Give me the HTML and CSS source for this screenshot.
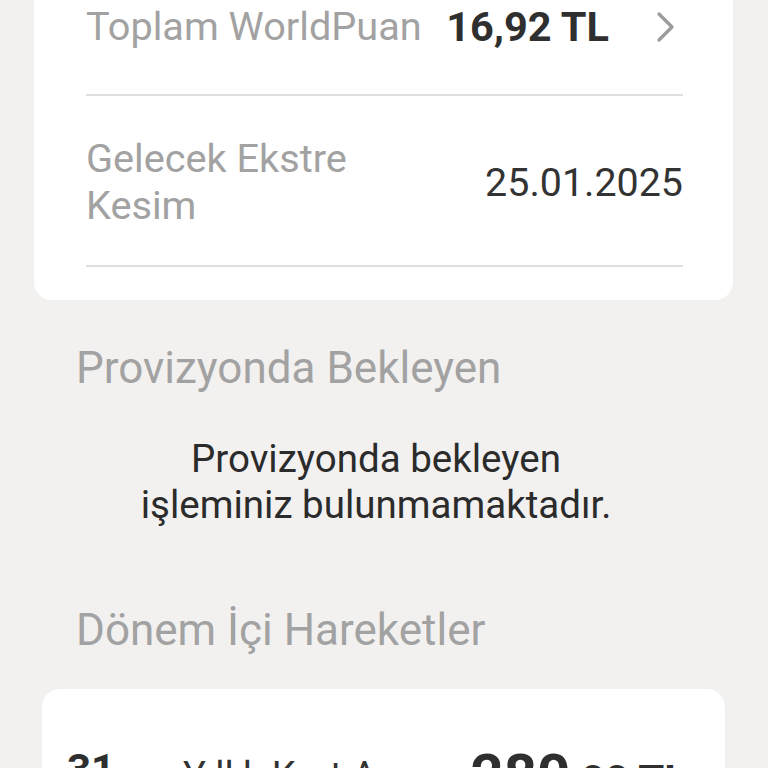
FILE: index.html
```html
<!DOCTYPE html>
<html lang="tr">
<head>
  <meta charset="UTF-8" />
  <meta name="viewport" content="width=device-width, initial-scale=1.0"/>
  <title>Kart Detayı</title>
  <link rel="stylesheet" href="styles.css">
</head>
<body>
  <div class="summary">
    <div class="row">
      <div class="label">Toplam WorldPuan</div>
      <div class="value bold">16,92 TL</div>
      <svg class="chevron" width="20" height="32" viewBox="0 0 20 32">
        <polyline points="3,3 16,16 3,29" fill="none" stroke="#9b9b9b" stroke-width="3.2" stroke-linecap="round" stroke-linejoin="round"/>
      </svg>
    </div>
    <div class="row">
      <div class="label wrap">Gelecek Ekstre Kesim</div>
      <div class="value">25.01.2025</div>
    </div>
  </div>

  <h2 class="section-title">Provizyonda Bekleyen</h2>
  <div class="empty">Provizyonda bekleyen<br>işleminiz bulunmamaktadır.</div>

  <h2 class="section-title second">Dönem İçi Hareketler</h2>
  <div class="tx-card">
    <div class="tx-row">
      <div class="tx-date">
        <div class="day">31</div>
        <div class="month">Ara</div>
      </div>
      <div class="tx-desc">Yıllık Kart Aidatı</div>
      <div class="tx-amount"><span class="big">280</span>,00 TL</div>
    </div>
  </div>
</body>
</html>
```

FILE: styles.css
```css
body {
  font-family: Roboto, 'Noto Sans', sans-serif;
  background: #f2f1f0;
  margin: 0;
  overflow: hidden;
}
.summary {
  background: #ffffff;
  margin: -36px 35px 0 34px;
  padding: 0 50px 33px 52px;
  border-radius: 18px;
}
.row {
  display: flex;
  align-items: center;
  line-height: 47px;
  padding: 39px 0 36px;
  border-bottom: 2px solid #dfdfdf;
}
.row:first-child {
  padding-bottom: 44px;
}
.label {
  flex: 1;
  font-size: 39.7px;
  color: #a2a2a2;
  white-space: nowrap;
}
.label.wrap {
  flex: 0 1 300px;
  white-space: normal;
}
.value {
  margin-left: auto;
  font-size: 39.4px;
  color: #333333;
}
.value.bold {
  font-size: 41.5px;
  font-weight: bold;
  color: #2f2f2f;
}
.chevron {
  margin-left: 47px;
  margin-right: 7px;
}
.section-title {
  font-size: 44px;
  font-weight: normal;
  line-height: 52px;
  color: #a2a2a2;
  margin: 42px 0 0 76px;
}
.section-title.second {
  margin-top: 76px;
}
.empty {
  font-size: 38.5px;
  line-height: 46px;
  color: #2b2b2b;
  text-align: center;
  margin-top: 42px;
  padding: 0 50px 0 34px;
}
.tx-card {
  background: #ffffff;
  margin: 33px 43px 0 42px;
  padding: 51px 38px 40px 25px;
  border-radius: 18px;
}
.tx-row {
  display: flex;
  align-items: flex-start;
}
.tx-date {
  width: 116px;
  margin-top: 5px;
  color: #2f2f2f;
}
.day {
  font-size: 42px;
  font-weight: bold;
  line-height: 50px;
}
.month {
  font-size: 30px;
  line-height: 36px;
}
.tx-desc {
  flex: 1;
  min-width: 0;
  max-width: 222px;
  margin-top: 13px;
  font-size: 38px;
  line-height: 46px;
  color: #333333;
  white-space: nowrap;
  overflow: hidden;
  text-overflow: ellipsis;
}
.tx-amount {
  margin-left: auto;
  font-size: 42px;
  font-weight: bold;
  line-height: 70px;
  color: #2f2f2f;
  white-space: nowrap;
}
.tx-amount .big {
  font-size: 58px;
}
```
